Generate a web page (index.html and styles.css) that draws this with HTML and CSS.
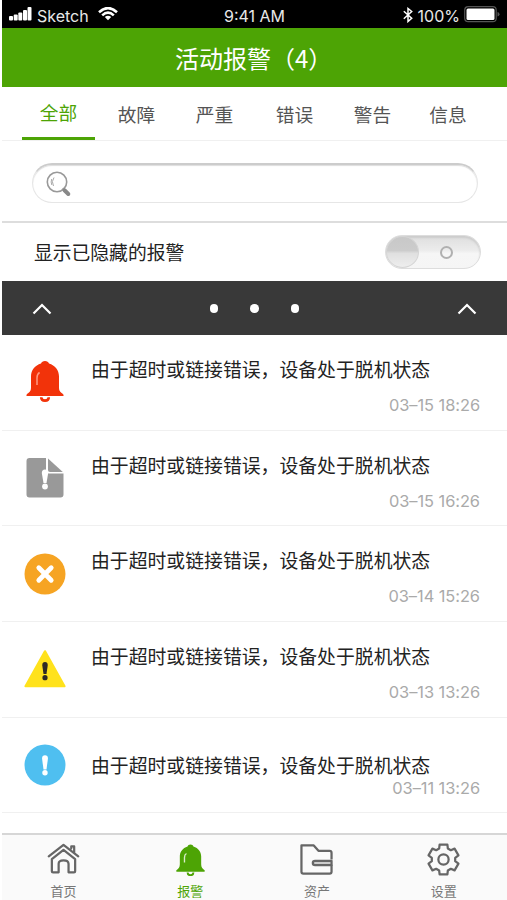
FILE: index.html
```html
<!DOCTYPE html>
<html lang="zh-CN">
<head>
<meta charset="utf-8">
<title>活动报警</title>
<link rel="stylesheet" href="styles.css">
</head>
<body>
<div class="app">
  <div class="status">
    <div class="status-left">
      <svg width="23" height="14" viewBox="0 0 23 14" fill="#fff"><rect x="0" y="9" width="4" height="4.500" rx="1"/><rect x="4.700" y="7.500" width="4" height="6" rx="1"/><rect x="9.300" y="5.500" width="4" height="8" rx="1"/><rect x="14" y="3" width="4" height="10.500" rx="1"/><rect x="18.500" y="0" width="4" height="13.500" rx="1"/></svg>
      <span class="carrier">Sketch</span>
      <svg width="20" height="14" viewBox="0 0 20 14"><g fill="none" stroke="#fff" stroke-width="2.600"><path d="M1 5.200Q10-3 19 5.200"/><path d="M4.200 8.400Q10 3 15.800 8.400"/></g><path d="M6.800 10Q10 7.300 13.200 10L10 13.300Z" fill="#fff"/></svg>
    </div>
    <div class="clock">9:41 AM</div>
    <div class="status-right">
      <svg width="10" height="16" viewBox="0 0 10 16"><path d="M.8 4.300L8.700 11.200 5 14.500V1.500L8.700 4.500.8 11.700" fill="none" stroke="#fff" stroke-width="1.500"/></svg>
      <span class="percent">100%</span>
      <svg width="36" height="17" viewBox="0 0 36 17"><rect x=".7" y=".7" width="31.500" height="15" rx="3.500" fill="none" stroke="#555" stroke-width="1.200"/><rect x="2.500" y="2.500" width="28" height="11.500" rx="1.500" fill="#fff"/><path d="M33.500 6q2 .3 2 2.200t-2 2.200z" fill="#555"/></svg>
    </div>
  </div>
  <header class="header">活动报警（4）</header>
  <nav class="tabs">
    <div class="tab active">全部</div><div class="tab">故障</div><div class="tab">严重</div><div class="tab">错误</div><div class="tab">警告</div><div class="tab">信息</div>
  </nav>
  <div class="search">
    <div class="search-box">
      <svg width="26" height="26" viewBox="0 0 26 26" fill="none"><circle cx="11" cy="11" r="9.700" stroke="#999" stroke-width="1.600"/><path d="M8 6.500Q5 10.500 7.500 15M5.700 8Q4.500 11 5.800 14" stroke="#aaa" stroke-width="1"/><path d="M16.500 17.500L19.500 20" stroke="#999" stroke-width="2.500"/><path d="M18.500 19.300L22.300 23" stroke="#888" stroke-width="4" stroke-linecap="round"/></svg>
    </div>
  </div>
  <div class="hidden-row">
    <span class="label">显示已隐藏的报警</span>
    <div class="switch"><i class="knob"></i><i class="ring"></i></div>
  </div>
  <div class="darkbar">
    <svg width="20" height="12" viewBox="0 0 20 12"><path d="M1.500 10.500L10 2l8.500 8.500" fill="none" stroke="#fff" stroke-width="2.200"/></svg>
    <div class="dots"><i></i><i></i><i></i></div>
    <svg width="20" height="12" viewBox="0 0 20 12"><path d="M1.500 10.500L10 2l8.500 8.500" fill="none" stroke="#fff" stroke-width="2.200"/></svg>
  </div>
  <main class="list">
    <div class="row">
      <svg class="icon" viewBox="0 0 42 42"><path d="M21 0c2 0 3.500 1 4 2.500 6 2 10 6.500 10 13V27c0 3 1.500 4.500 4 6q1.500 2-.5 2h-35q-2 0-.5-2c2.500-1.500 4-3 4-6V15.500C7 9 11 4.500 17 2.500 17.500 1 19 0 21 0Z" fill="#f2330a"/><path d="M17.200 36.200q0 3.400 3.800 3.400t3.800-3.400" fill="none" stroke="#f2330a" stroke-width="2.600"/><path d="M13 24V17q0-4 2.600-5.500" fill="none" stroke="#ff9a82" stroke-width="1.500"/></svg>
      <div class="message">由于超时或链接错误，设备处于脱机状态</div><time>03–15 18:26</time>
    </div>
    <div class="row">
      <svg class="icon" viewBox="0 0 42 42"><path d="M5.500 1H22v12.500q0 3 3 3h14.500V37.500q0 3-3 3h-31q-3 0-3-3V4q0-3 3-3Z" fill="#999"/><path d="M24 1.500L38.800 15H26q-2 0-2-2Z" fill="#999"/><path d="M21 12.500q3.200 0 3.200 3.500L22.500 26h-3L17.800 16q0-3.500 3.200-3.500Z" fill="#fff"/><circle cx="21" cy="29.500" r="2.900" fill="#fff"/></svg>
      <div class="message">由于超时或链接错误，设备处于脱机状态</div><time>03–15 16:26</time>
    </div>
    <div class="row">
      <svg class="icon" viewBox="0 0 42 42"><circle cx="21" cy="21" r="20.500" fill="#f6a423"/><path d="M14.800 14.800l12.400 12.400m0-12.400L14.800 27.200" stroke="#fff" stroke-width="4.800" stroke-linecap="round"/></svg>
      <div class="message">由于超时或链接错误，设备处于脱机状态</div><time>03–14 15:26</time>
    </div>
    <div class="row">
      <svg class="icon" viewBox="0 0 42 42"><path d="M21 3.300L40.500 38.200H1.500Z" fill="#ffe21c" stroke="#ffe21c" stroke-width="2.200" stroke-linejoin="round"/><path d="M21 14q3 0 2.700 3.500L22.500 26h-3L18.300 17.500Q18 14 21 14Z" fill="#2d2926"/><circle cx="21" cy="29.700" r="2.600" fill="#2d2926"/></svg>
      <div class="message">由于超时或链接错误，设备处于脱机状态</div><time>03–13 13:26</time>
    </div>
    <div class="row centered">
      <svg class="icon" viewBox="0 0 42 42"><circle cx="21" cy="21" r="20.500" fill="#4fbff0"/><path d="M21 11.300q3.200 0 2.900 3.500L22.500 25.500h-3L18.100 14.800Q17.800 11.300 21 11.300Z" fill="#fff"/><circle cx="21" cy="28.700" r="2.700" fill="#fff"/></svg>
      <div class="message">由于超时或链接错误，设备处于脱机状态</div><time>03–11 13:26</time>
    </div>
  </main>
  <footer class="bottom">
    <div class="nav"><svg viewBox="0 0 34 34" fill="none" stroke="#666" stroke-width="2.300" stroke-linejoin="round" stroke-linecap="round"><path d="M1.800 13.800L17 2l15.200 11.800M25 5.500V3.500h3v6.500"/><path d="M5 16.500L17 7l12 9.500V29q0 1.200-1.200 1.200h-5.600V21.500Q22 18 17 18t-5 3.500v8.700H6.200Q5 30.200 5 29Z"/></svg><span>首页</span></div>
    <div class="nav on"><svg viewBox="0 0 34 34"><path d="M17 1.500c1.600 0 2.700.8 3 2 5.200 1.700 8 5.500 8 10.500v8c0 3 1.200 4.500 3.500 6q1 1.500-.5 1.500H3q-1.500 0-.5-1.500C4.800 26.500 6 25 6 22v-8c0-5 2.800-8.800 8-10.500.3-1.200 1.400-2 3-2Z" fill="#4da405"/><path d="M14 30.500q0 2.700 3 2.700t3-2.700" fill="none" stroke="#4da405" stroke-width="2"/><path d="M10.800 20V15q0-3 2-4.200" fill="none" stroke="#d9edc9" stroke-width="1.400"/></svg><span>报警</span></div>
    <div class="nav"><svg viewBox="0 0 34 34" fill="none" stroke="#666" stroke-width="2.300" stroke-linejoin="round"><path d="M32.500 17V10q0-2-2-2H19L14.200 2.500H1.500V29.500q0 2 2 2h27q2 0 2-2V22.500"/><path d="M32.500 18.300H15.500q-2.300 0-2.300 2.200t2.300 2.200h17Z" fill="#ccc"/></svg><span>资产</span></div>
    <div class="nav"><svg viewBox="0 0 34 34" fill="none" stroke="#666" stroke-width="2.300" stroke-linejoin="round"><g transform="translate(17 17)"><path d="M-4-15.300H4L4.500-11.300 7.540-9.550 11.420-11.210 15.420-4.290 12.040-1.750V1.750L15.420 4.290 11.420 11.210 7.540 9.550 4.500 11.300 4 15.300H-4L-4.500 11.300-7.540 9.550-11.420 11.210-15.420 4.290-12.040 1.750V-1.750L-15.420-4.290-11.420-11.210-7.540-9.550-4.500-11.300Z"/><circle r="5.300"/></g></svg><span>设置</span></div>
  </footer>
</div>
</body>
</html>
```

FILE: styles.css
```css
* { box-sizing: border-box; }
body { margin: 0; background: #fff; font-family: Inter, "Noto Sans CJK SC", sans-serif; color: #222; }
svg { display: block; flex: none; }
.app { width: 507px; height: 900px; padding-left: 2px; display: flex; flex-direction: column; overflow: hidden; }
.app > * { flex: none; }
.status { height: 28px; background: #000; color: #e8e8e8; display: grid; grid-template-columns: 1fr auto 1fr; align-items: center; padding: 4px 7px 0; font-size: 16px; line-height: 24px; }
.status-left, .status-right { display: flex; align-items: center; }
.status-left svg { margin-top: -4px; }
.carrier { margin: 0 9px 0 5px; }
.status-right { justify-content: flex-end; }
.status-right svg { margin-top: -3px; }
.percent { margin: 0 4px 0 5px; }
.header { height: 59px; background: #4da405; color: #fff; font-family: "Noto Sans CJK SC", sans-serif; font-size: 24px; line-height: 60px; padding-left: 173px; }
.tabs { height: 54px; padding-left: 20px; border-bottom: 1px solid #f0f0f0; display: grid; grid-template-columns: 75.5px 78px 78px 82px 74px 77px; font-size: 18.7px; line-height: 57px; text-align: center; color: #555; }
.tab.active { width: 73px; height: 53px; line-height: 54px; color: #4da405; border-bottom: 3px solid #4da405; }
.search { height: 82px; padding: 22px 29px 0 30px; border-bottom: 2px solid #ddd; }
.search-box { height: 40px; border: 1px solid #e6e6e6; border-top: 2px solid #ccc; border-radius: 20px; padding: 6px 0 0 13px; box-shadow: inset 0 1px 1px #ddd; }
.hidden-row { height: 58px; padding: 0 26px 0 32px; display: flex; align-items: center; justify-content: space-between; font-size: 18.8px; }
.label { margin-top: -2px; }
.switch { width: 96px; height: 34px; border-radius: 17px; border: 1px solid #ddd; background: linear-gradient(#dedede, #ececec 45%, #f6f6f6 55%, #f5f5f5); box-shadow: inset 0 2px 2px #ccc; display: flex; align-items: center; justify-content: space-between; padding-right: 27px; }
.knob { width: 33px; height: 32px; border-radius: 50%; border: 1px solid #d5d5d5; background: linear-gradient(#c8c8c8, #ccc 45%, #e0e0e0 55%, #eee); }
.ring { width: 13px; height: 13px; border-radius: 50%; border: 2px solid #b0b0b0; }
.darkbar { height: 54px; background: #393939; display: flex; align-items: center; justify-content: space-between; padding: 1px 30px 0; }
.dots { display: flex; gap: 32px; }
.dots i { width: 8.5px; height: 8.5px; border-radius: 50%; background: #fff; }
.list { height: 498px; }
.row { height: 95.7px; border-bottom: 1px solid #f0f0f0; display: grid; grid-template-columns: 89px 1fr; grid-template-rows: 55px 1fr; padding: 5px 27px 0 0; }
.icon { width: 42px; height: 42px; grid-row: 1 / 3; margin: 21.3px 0 0 21.6px; }
.message { font-size: 18.85px; line-height: 61.5px; height: 55px; white-space: nowrap; }
.row time { font-size: 16.4px; line-height: 20px; color: #aaa; text-align: right; letter-spacing: -.05px; }
.centered .message { line-height: 88px; }
.bottom { height: 67px; border-top: 2px solid #d6d6d6; background: #fafafa; display: flex; }
.nav { width: 126.8px; display: flex; flex-direction: column; align-items: center; font-size: 13px; line-height: 20px; color: #777; padding-top: 8px; }
.nav:first-child { width: 123px; margin-right: 2px; }
.nav svg { width: 33px; height: 33px; margin-bottom: 5px; }
.nav.on { color: #4da405; }
```
